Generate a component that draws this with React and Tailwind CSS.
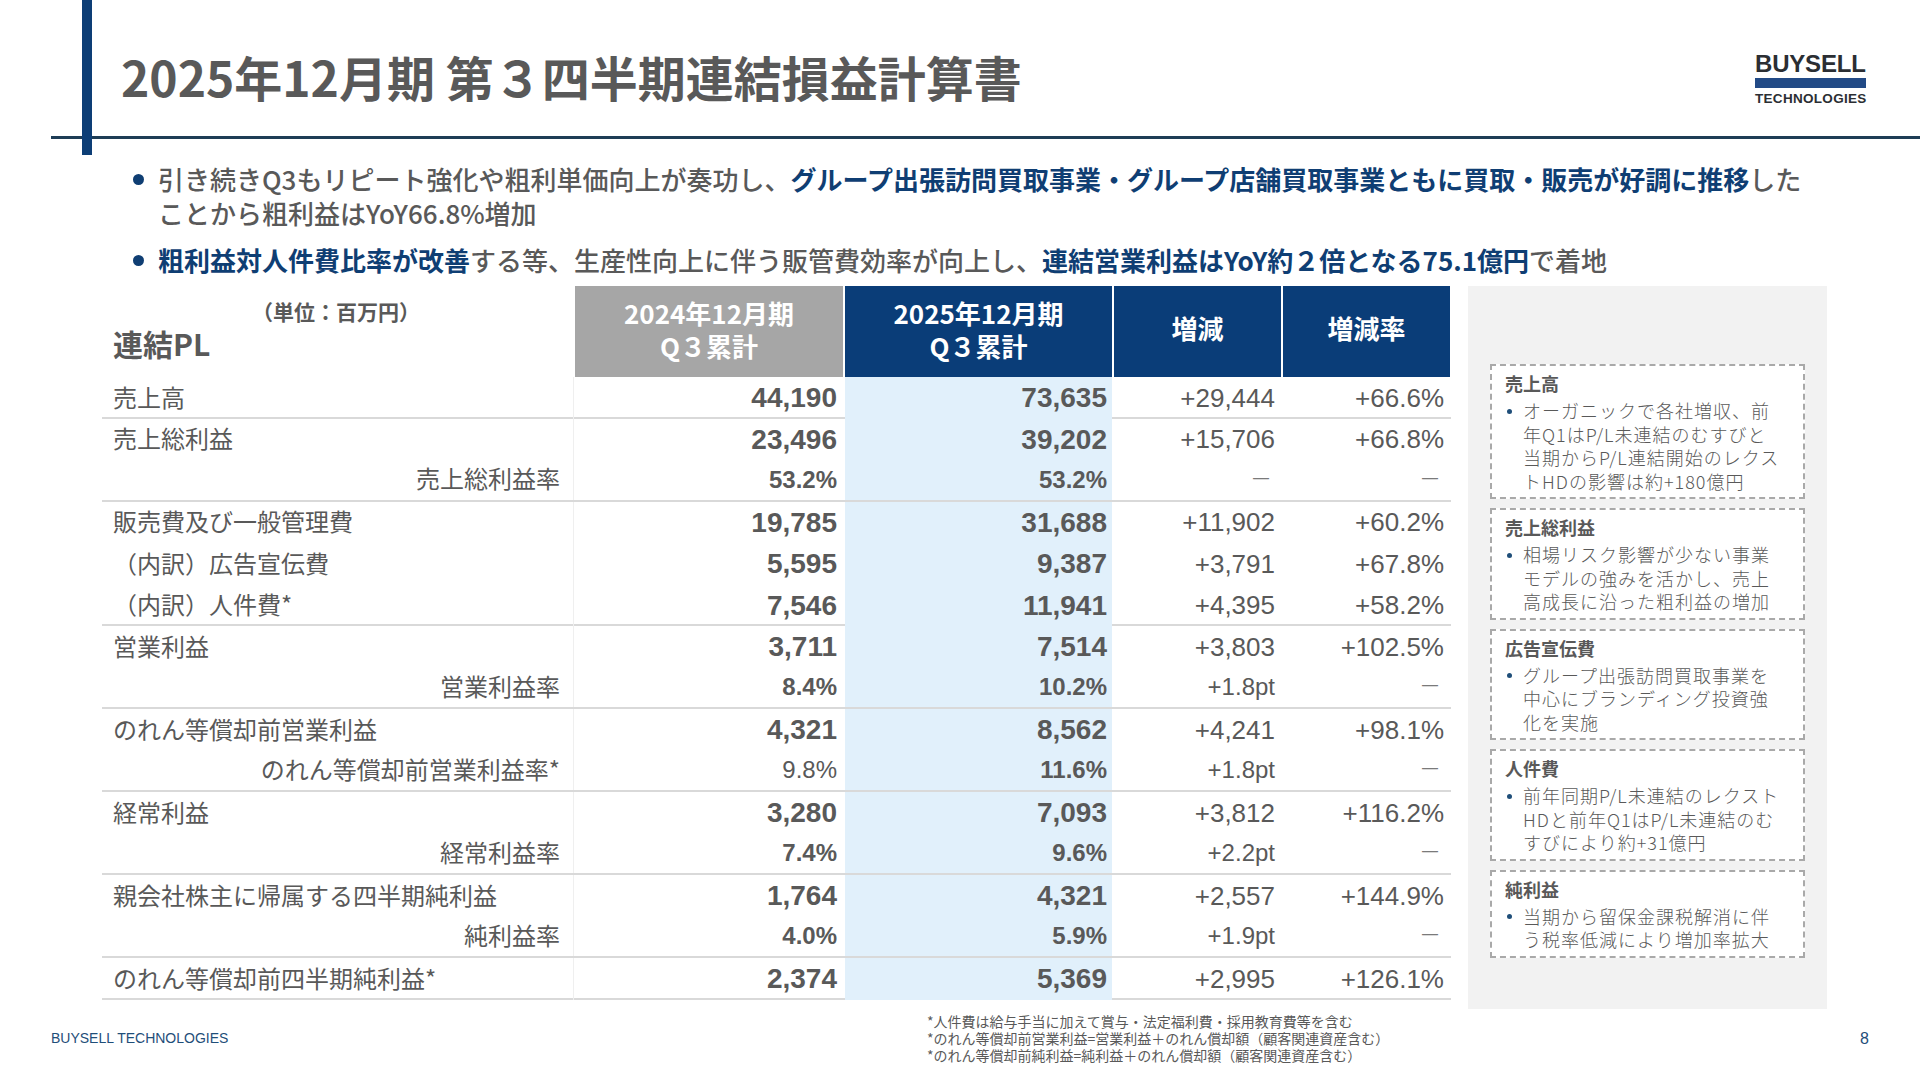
import React from "react";

const rows = [
  { label: "売上高", a: "44,190", b: "73,635", c: "+29,444", d: "+66.6%", end: true },
  { label: "売上総利益", a: "23,496", b: "39,202", c: "+15,706", d: "+66.8%" },
  { label: "売上総利益率", a: "53.2%", b: "53.2%", c: "—", d: "—", pct: true, end: true },
  { label: "販売費及び一般管理費", a: "19,785", b: "31,688", c: "+11,902", d: "+60.2%" },
  { label: "（内訳）広告宣伝費", a: "5,595", b: "9,387", c: "+3,791", d: "+67.8%" },
  { label: "（内訳）人件費*", a: "7,546", b: "11,941", c: "+4,395", d: "+58.2%", end: true },
  { label: "営業利益", a: "3,711", b: "7,514", c: "+3,803", d: "+102.5%" },
  { label: "営業利益率", a: "8.4%", b: "10.2%", c: "+1.8pt", d: "—", pct: true, end: true },
  { label: "のれん等償却前営業利益", a: "4,321", b: "8,562", c: "+4,241", d: "+98.1%" },
  { label: "のれん等償却前営業利益率*", a: "9.8%", aReg: true, b: "11.6%", c: "+1.8pt", d: "—", pct: true, end: true },
  { label: "経常利益", a: "3,280", b: "7,093", c: "+3,812", d: "+116.2%" },
  { label: "経常利益率", a: "7.4%", b: "9.6%", c: "+2.2pt", d: "—", pct: true, end: true },
  { label: "親会社株主に帰属する四半期純利益", a: "1,764", b: "4,321", c: "+2,557", d: "+144.9%" },
  { label: "純利益率", a: "4.0%", b: "5.9%", c: "+1.9pt", d: "—", pct: true, end: true },
  { label: "のれん等償却前四半期純利益*", a: "2,374", b: "5,369", c: "+2,995", d: "+126.1%", end: true },
];

const notes = [
  { title: "売上高", lines: ["オーガニックで各社増収、前", "年Q1はP/L未連結のむすびと", "当期からP/L連結開始のレクス", "トHDの影響は約+180億円"] },
  { title: "売上総利益", lines: ["相場リスク影響が少ない事業", "モデルの強みを活かし、売上", "高成長に沿った粗利益の増加"] },
  { title: "広告宣伝費", lines: ["グループ出張訪問買取事業を", "中心にブランディング投資強", "化を実施"] },
  { title: "人件費", lines: ["前年同期P/L未連結のレクスト", "HDと前年Q1はP/L未連結のむ", "すびにより約+31億円"] },
  { title: "純利益", lines: ["当期から留保金課税解消に伴", "う税率低減により増加率拡大"] },
];

function Num({ children, bold, size, dash }) {
  if (dash) {
    return (
      <span className="font-['Liberation_Sans',Arial,sans-serif] text-[16px] text-[#7a7a7a] pr-[6px] pb-[4px]">—</span>
    );
  }
  return (
    <span
      className={
        "font-['Liberation_Sans',Arial,sans-serif] text-[#595959] " +
        (bold ? "font-bold " : "font-normal ") +
        (size === "lg" ? "text-[28px]" : size === "md" ? "text-[26px]" : "text-[24px]")
      }
    >
      {children}
    </span>
  );
}

function Row({ r }) {
  const border = r.end ? "border-b-2 border-[#d9d9d9]" : "";
  return (
    <div className={"grid grid-cols-[472px_270px_269px_169px_169px] h-[41.5px] " + border}>
      <div
        className={
          "flex items-center pb-[3px] text-[24px] leading-[30px] text-[#595959] border-r border-[#efefef] " +
          (r.pct ? "justify-end pr-[13px]" : "pl-[11px]")
        }
      >
        {r.label}
      </div>
      <div className="flex items-center justify-end pr-[7px]">
        <Num bold={!r.aReg} size={r.pct ? "sm" : "lg"}>{r.a}</Num>
      </div>
      <div className="flex items-center justify-end pr-[5px] mx-[1px] bg-[#e1f0fb]">
        <Num bold size={r.pct ? "sm" : "lg"}>{r.b}</Num>
      </div>
      <div className="flex items-center justify-end pr-[7px]">
        <Num size={r.pct ? "sm" : "md"} dash={r.c === "—"}>{r.c}</Num>
      </div>
      <div className="flex items-center justify-end pr-[7px]">
        <Num size={r.pct ? "sm" : "md"} dash={r.d === "—"}>{r.d}</Num>
      </div>
    </div>
  );
}

function NoteBox({ n }) {
  return (
    <div className="border-2 border-dashed border-[#a9a9a9] bg-white pt-[6px] pb-[4px] pl-[13px]">
      <div className="text-[18px] leading-[22px] font-bold text-[#595959]">{n.title}</div>
      <div className="mt-[5px] flex">
        <div className="shrink-0 w-[5px] h-[5px] rounded-full bg-[#1f4e79] mt-[9.5px] ml-[2px] mr-[11px]" />
        <div className="text-[18px] leading-[23.5px] tracking-[1px] font-light text-[#595959] whitespace-nowrap">
          {n.lines.map((l, i) => (
            <div key={i}>{l}</div>
          ))}
        </div>
      </div>
    </div>
  );
}

export default function App() {
  return (
    <div className="w-[1920px] h-[1080px] bg-white relative overflow-hidden font-['Noto_Sans_CJK_JP','Noto_Sans',sans-serif] text-[#595959]">
      <div className="absolute left-[82px] top-0 w-[10px] h-[155px] bg-[#0d3e76]" />

      <header className="h-[136px] flex justify-between">
        <h1 className="pl-[121px] pt-[52px] text-[48px] leading-[48px] font-bold text-[#595959] whitespace-nowrap">
          2025年12月期 第３四半期連結損益計算書
        </h1>
        <div className="mr-[54px] mt-[52px] flex flex-col w-[111px] font-['Liberation_Sans',Arial,sans-serif] font-bold text-[#2b2e33]">
          <div className="text-[24px] leading-[24px] tracking-[-0.2px]">BUYSELL</div>
          <div className="mt-[2px] h-[10px] bg-[#224a86]" />
          <div className="mt-[4px] text-[13.5px] leading-[13.5px] tracking-[0.3px]">TECHNOLOGIES</div>
        </div>
      </header>
      <div className="ml-[51px] h-[3px] bg-[#1e3d56]" />

      <div className="mt-[23px] pl-[133px] flex flex-col gap-[13px] text-[26px] leading-[34px] font-medium whitespace-nowrap">
        <div className="flex items-start">
          <span className="shrink-0 w-[11px] h-[11px] rounded-full bg-[#0f3e73] mt-[12px] mr-[14px]" />
          <div>
            <div>
              引き続きQ3もリピート強化や粗利単価向上が奏功し、
              <span className="font-bold text-[#0f3e73]">
                グループ出張訪問買取事業・グループ店舗買取事業ともに買取・販売が好調に推移
              </span>
              した
            </div>
            <div>ことから粗利益はYoY66.8%増加</div>
          </div>
        </div>
        <div className="flex items-start">
          <span className="shrink-0 w-[11px] h-[11px] rounded-full bg-[#0f3e73] mt-[12px] mr-[14px]" />
          <div>
            <span className="font-bold text-[#0f3e73]">粗利益対人件費比率が改善</span>
            する等、生産性向上に伴う販管費効率が向上し、
            <span className="font-bold text-[#0f3e73]">連結営業利益はYoY約２倍となる75.1億円</span>
            で着地
          </div>
        </div>
      </div>

      <div className="mt-[9px] flex items-start">
        <div className="ml-[102px] w-[1349px]">
          <div className="grid grid-cols-[472px_270px_269px_169px_169px] h-[91px]">
            <div className="flex flex-col pt-[12px] text-[#595959] font-bold">
              <div className="pl-[150px] text-[21px] leading-[26px]">（単位：百万円）</div>
              <div className="mt-[3px] pl-[11px] text-[30px] leading-[32px]">連結PL</div>
            </div>
            <div className="mx-[1px] bg-[#a6a6a6] flex items-center justify-center text-center text-white font-bold text-[26px] leading-[33px] pb-[6px]">
              <p>2024年12月期<br />Q３累計</p>
            </div>
            <div className="mx-[1px] bg-[#0a3d78] flex items-center justify-center text-center text-white font-bold text-[26px] leading-[33px] pb-[6px]">
              <p>2025年12月期<br />Q３累計</p>
            </div>
            <div className="mx-[1px] bg-[#0a3d78] flex items-center justify-center text-white font-bold text-[26px] pb-[8px]">
              増減
            </div>
            <div className="mx-[1px] bg-[#0a3d78] flex items-center justify-center text-white font-bold text-[26px] pb-[8px]">
              増減率
            </div>
          </div>
          {rows.map((r, i) => (
            <Row key={i} r={r} />
          ))}
        </div>

        <div className="ml-[17px] w-[359px] h-[723px] bg-[#f2f2f2] pt-[78px] px-[22px] flex flex-col gap-[9px]">
          {notes.map((n, i) => (
            <NoteBox key={i} n={n} />
          ))}
        </div>
      </div>

      <footer className="mt-[4px] h-[51px] flex items-center">
        <div className="ml-[51px] w-[876px] text-[14px] font-['Liberation_Sans',Arial,sans-serif] text-[#1f4e79]">
          BUYSELL TECHNOLOGIES
        </div>
        <div className="text-[14px] leading-[17px] text-[#595959] whitespace-nowrap">
          <div>*人件費は給与手当に加えて賞与・法定福利費・採用教育費等を含む</div>
          <div>*のれん等償却前営業利益=営業利益＋のれん償却額（顧客関連資産含む）</div>
          <div>*のれん等償却前純利益=純利益＋のれん償却額（顧客関連資産含む）</div>
        </div>
        <div className="ml-auto mr-[51px] text-[16px] font-['Liberation_Sans',Arial,sans-serif] text-[#1f4e79]">8</div>
      </footer>
    </div>
  );
}
